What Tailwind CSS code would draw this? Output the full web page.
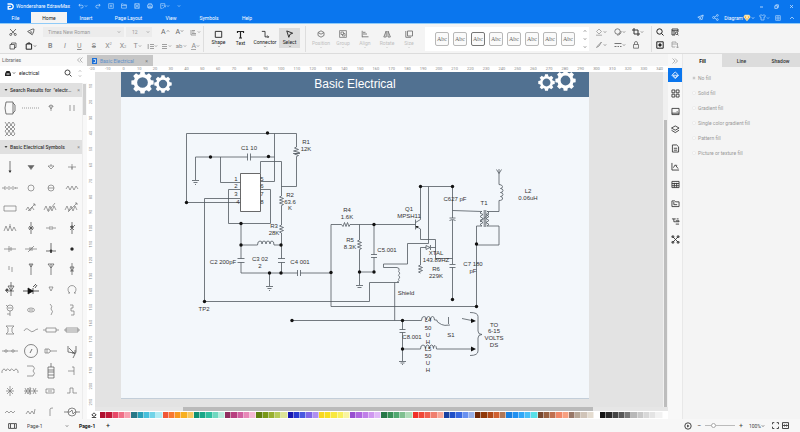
<!DOCTYPE html>
<html lang="en">
<head>
<meta charset="utf-8">
<title>Wondershare EdrawMax</title>
<script src="https://cdn.jsdelivr.net/npm/@tailwindcss/browser@4"></script>
</head>
<body class="h-screen flex flex-col overflow-hidden bg-[#f4f4f4] text-[#333] font-['Roboto','Noto_Sans',sans-serif] text-[5px] leading-[6px]">

<svg class="hidden">
  <symbol id="caret" viewBox="0 0 4 4"><path d="M.8 1.3 2 2.6 3.2 1.3" fill="none" stroke="currentColor" stroke-width=".6"/></symbol>
  <symbol id="gear" viewBox="-12 -12 24 24">
    <g fill="#fff"><circle r="7.4" fill="none" stroke="#fff" stroke-width="3.6"/>
    <path id="tooth" d="M-2.7-8 -2.1-11.6H2.1L2.7-8ZM-2.7 8 -2.1 11.6H2.1L2.7 8Z"/>
    <use href="#tooth" transform="rotate(45)"/><use href="#tooth" transform="rotate(90)"/><use href="#tooth" transform="rotate(135)"/></g>
  </symbol>
</svg>

<header class="bg-[#0a76ee] text-white shrink-0 border-b border-[#8fcbf8]">
  <div class="h-[12px] flex items-center pl-[7px] pr-[6px]">
    <svg class="w-[7px] h-[7px] mr-[2px]" viewBox="0 0 7 7" fill="none" stroke="#fff" stroke-width="1.3"><path d="M.5 1h3.2a2.4 2.4 0 0 1 0 5H1.2V3.4h2.6"/></svg>
    <span class="w-[62px] whitespace-nowrap">Wondershare EdrawMax</span>
    <div class="flex items-center gap-[7px] text-[#c4e0fc]">
      <button aria-label="Undo" class="flex items-center"><svg class="w-[6px] h-[6px]" viewBox="0 0 7 7" fill="none" stroke="currentColor" stroke-width=".8"><path d="M2.5 1 1 2.6l1.5 1.5M1 2.6h3.4a1.5 1.5 0 0 1 0 3.2H3"/></svg><svg class="w-[4px] h-[4px]"><use href="#caret"/></svg></button>
      <button aria-label="Redo"><svg class="w-[6px] h-[6px]" viewBox="0 0 7 7" fill="none" stroke="currentColor" stroke-width=".8"><path d="M4.5 1 6 2.6 4.5 4.1M6 2.6H2.6a1.5 1.5 0 0 0 0 3.2H4"/></svg></button>
      <button aria-label="New"><svg class="w-[6px] h-[6px]" viewBox="0 0 7 7" fill="none" stroke="currentColor" stroke-width=".7"><path d="M.8.8h5.4v5.4H.8ZM3.5 2v3M2 3.5h3"/></svg></button>
      <button aria-label="Open"><svg class="w-[6px] h-[6px]" viewBox="0 0 7 7" fill="none" stroke="currentColor" stroke-width=".7"><path d="M.6 6V1h2l.7 1h3v4ZM.6 3h5.7"/></svg></button>
      <button aria-label="Save"><svg class="w-[6px] h-[6px]" viewBox="0 0 7 7" fill="none" stroke="currentColor" stroke-width=".7"><path d="M.8.8h5.4v5.4H.8ZM2 .8v2h3v-2M2 6.2v-2h3v2"/></svg></button>
      <button aria-label="Print"><svg class="w-[6px] h-[6px]" viewBox="0 0 7 7" fill="none" stroke="currentColor" stroke-width=".7"><path d="M1.8 2.2V.8h3.4v1.4M.6 2.2h5.8v3H.6ZM1.8 4v2.2h3.4V4Z"/></svg></button>
      <button aria-label="Export" class="flex items-center"><svg class="w-[6px] h-[6px]" viewBox="0 0 7 7" fill="none" stroke="currentColor" stroke-width=".7"><path d="M3 6.2H.8V.8h4.8V3M2 3h2M3.5 6 6.3 3.3M4.6 3.3h1.7V5"/></svg><svg class="w-[4px] h-[4px]"><use href="#caret"/></svg></button>
      <button aria-label="More"><svg class="w-[4px] h-[4px]"><use href="#caret"/></svg></button>
    </div>
    <div class="ml-auto flex items-center gap-[10px] text-[#d5e9fd]">
      <button aria-label="Minimize"><svg class="w-[5px] h-[5px]" viewBox="0 0 5 5" stroke="currentColor" stroke-width=".8"><path d="M1 3h3"/></svg></button>
      <button aria-label="Restore"><svg class="w-[5px] h-[5px]" viewBox="0 0 5 5" fill="none" stroke="currentColor" stroke-width=".7"><path d="M.8 1.8h2.6v2.6H.8ZM1.8 1.8V.8h2.6v2.6h-1"/></svg></button>
      <button aria-label="Close"><svg class="w-[5px] h-[5px]" viewBox="0 0 5 5" stroke="currentColor" stroke-width=".7"><path d="m1 1 3 3M4 1 1 4"/></svg></button>
    </div>
  </div>
  <div class="flex h-[11px] items-stretch">
    <nav class="flex [&>a]:flex [&>a]:items-center [&>a]:justify-center">
      <a href="#" class="w-[31px]">File</a>
      <a href="#" class="w-[36px] bg-[#f4f4f4] text-[#222]">Home</a>
      <a href="#" class="w-[38px]">Insert</a>
      <a href="#" class="w-[47px]">Page Layout</a>
      <a href="#" class="w-[38px]">View</a>
      <a href="#" class="w-[38px]">Symbols</a>
      <a href="#" class="w-[38px]">Help</a>
    </nav>
    <div class="ml-auto flex items-center gap-[8px] pr-[5px] text-[#b5d8fb]">
      <button aria-label="Send"><svg class="w-[7px] h-[7px]" viewBox="0 0 7 7" fill="none" stroke="currentColor" stroke-width=".8"><path d="M.8 3.2 6.2 1 5 5.8 3 4.2ZM6.2 1 3 4.2v2"/></svg></button>
      <button aria-label="Share"><svg class="w-[7px] h-[7px]" viewBox="0 0 7 7" fill="none" stroke="currentColor" stroke-width=".8"><circle cx="1.6" cy="3.5" r="1"/><circle cx="5.4" cy="1.4" r=".9"/><circle cx="5.4" cy="5.6" r=".9"/><path d="m2.5 3 2-1.2M2.5 4l2 1.2"/></svg></button>
      <button class="flex items-center text-white -ml-[3px]">Diagram<svg class="w-[8px] h-[8px]" viewBox="0 0 8 8"><path d="M1.800.8h4.400L7.600 3 4 7.300.400 3Z" fill="#fbe3a8"/><path d="M1.600 2.400h4.800L4 6.600Z" fill="#e9a92e"/><path d="M3 2.400h2L4 6Z" fill="#fff"/></svg><svg class="w-[4px] h-[4px]"><use href="#caret"/></svg></button>
      <button aria-label="Theme" class="flex items-center -ml-[4px]"><svg class="w-[7px] h-[7px]" viewBox="0 0 7 7" fill="none" stroke="currentColor" stroke-width=".7"><path d="M.6 1.6 2 .8q1.5 1.2 3 0l1.4.8-.6 1.6-.8-.3V6H2V2.9l-.8.3Z"/></svg><svg class="w-[4px] h-[4px]"><use href="#caret"/></svg></button>
      <button aria-label="Apps" class="-ml-[3px]"><svg class="w-[6px] h-[6px]" viewBox="0 0 7 7" fill="none" stroke="currentColor" stroke-width=".8"><path d="M.8.8h5.4v5.4H.8ZM3.5.8v5.4M.8 3.5h5.4"/></svg></button>
      <button aria-label="Collapse ribbon"><svg class="w-[6px] h-[6px]" viewBox="0 0 6 6" fill="none" stroke="currentColor" stroke-width=".8"><path d="M1 4 3 2l2 2"/></svg></button>
    </div>
  </div>
</header>

<section aria-label="Ribbon" class="h-[30px] shrink-0 flex items-center border-b border-[#dcdcdc] text-[#8a8a8a]">
  <div class="w-[40px] grid grid-cols-2 gap-y-[6px] pl-[4px] justify-items-center text-[#4a4a4a]">
    <button aria-label="Cut"><svg class="w-[8px] h-[8px]" viewBox="0 0 8 8" fill="none" stroke="currentColor" stroke-width=".8"><path d="m1 1 4.8 5M7 1 2.2 6"/><circle cx="1.7" cy="6.500" r="1"/><circle cx="6.300" cy="6.500" r="1"/></svg></button>
    <button aria-label="Format painter"><svg class="w-[8px] h-[8px]" viewBox="0 0 8 8" fill="none" stroke="currentColor" stroke-width=".8"><path d="m.6 3.5 4.5-2.300L7 1l-.4 3-1.4 2.800ZM2.500 4.500l2-1M3.600 5.300l1.600-.8"/></svg></button>
    <button aria-label="Copy"><svg class="w-[8px] h-[8px]" viewBox="0 0 8 8" fill="none" stroke="currentColor" stroke-width=".8"><path d="M1 2.500h4.500V7H1ZM2.500 2.500V1H7v4.500H5.500"/></svg></button>
    <button aria-label="Paste" class="flex items-center"><svg class="w-[8px] h-[8px]" viewBox="0 0 8 8" fill="none" stroke="#222" stroke-width="1"><path d="M1.200 2h5.400v5.200H1.200ZM2.800 2V1h2.200v1"/></svg><svg class="w-[4px] h-[4px]"><use href="#caret"/></svg></button>
  </div>
  <div class="w-[163px] flex flex-col gap-[5px] pl-[3px]">
    <div class="flex items-center h-[10px]">
      <label class="relative flex w-[81px] h-[10px] bg-[#ececec] items-center"><select aria-label="Font" class="appearance-none w-full px-[5px] text-[5px] leading-[6px] text-[#999]"><option>Times New Roman</option></select><svg class="absolute right-[3px] w-[4px] h-[4px]"><use href="#caret"/></svg></label>
      <label class="relative flex w-[26px] h-[10px] ml-[2px] bg-[#ececec] items-center"><select aria-label="Font size" class="appearance-none w-full px-[6px] text-[5px] leading-[6px] text-[#999]"><option>12</option></select><svg class="absolute right-[2px] w-[4px] h-[4px]"><use href="#caret"/></svg></label>
      <button aria-label="Increase font size" class="ml-[9px] text-[7px] text-[#666] flex items-center">A<svg class="w-[4px] h-[4px] mb-[3px] rotate-180"><use href="#caret"/></svg></button>
      <button aria-label="Decrease font size" class="ml-[6px] text-[7px] text-[#666] flex items-center">A<svg class="w-[4px] h-[4px] mb-[3px]"><use href="#caret"/></svg></button>
      <button aria-label="Align text" class="ml-[6px] flex items-center"><svg class="w-[7px] h-[7px]" viewBox="0 0 7 7" stroke="currentColor" stroke-width=".8"><path d="M1 1v5M2 1.500h3M2 3h2.500M2 4.500h4M1 6h5"/></svg><svg class="w-[4px] h-[4px]"><use href="#caret"/></svg></button>
    </div>
    <div class="grid grid-cols-11 h-[8px] text-[7px] leading-[8px] [&>button]:flex [&>button]:items-center [&>button]:justify-center">
      <button class="font-bold">B</button><button class="italic">I</button><button class="underline">U</button><button class="line-through">S</button>
      <button>X<sup class="text-[4px]">2</sup></button><button>X<sub class="text-[4px]">2</sub></button>
      <button>T<svg class="w-[4px] h-[4px]"><use href="#caret"/></svg></button>
      <button aria-label="Line spacing"><svg class="w-[7px] h-[7px]" viewBox="0 0 7 7" stroke="currentColor" stroke-width=".8"><path d="M1.200 1v5M3 1.500h4M3 3.500h4M3 5.500h4"/></svg><svg class="w-[4px] h-[4px]"><use href="#caret"/></svg></button>
      <button aria-label="Bullets"><svg class="w-[7px] h-[7px]" viewBox="0 0 7 7" stroke="currentColor" stroke-width=".8"><path d="M1 1.500h5M1 3.500h5M1 5.500h5"/></svg><svg class="w-[4px] h-[4px]"><use href="#caret"/></svg></button>
      <button class="text-[6px]">ab<svg class="w-[4px] h-[4px]"><use href="#caret"/></svg></button>
      <button><span class="border-b border-[#aaa] leading-[6px]">A</span><svg class="w-[4px] h-[4px]"><use href="#caret"/></svg></button>
    </div>
  </div>
  <div class="h-[26px] border-l border-[#dedede] flex items-start pt-[2px] w-[102px] pl-[3px] text-[#222] [&>button]:flex [&>button]:flex-col [&>button]:items-center [&>button]:h-[20px] [&>button]:pt-[2px] [&_.ic]:w-[9px] [&_.ic]:h-[9px] [&_.ic]:mb-[1px] [&_.ca]:w-[4px] [&_.ca]:h-[3px]">
    <button class="w-[23px]"><svg class="ic" viewBox="0 0 9 9" fill="none" stroke="currentColor"><path d="M1 1.500h7v6.500H1Z"/></svg>Shape<svg class="ca"><use href="#caret"/></svg></button>
    <button class="w-[21px]"><svg class="ic" viewBox="0 0 9 9" fill="none" stroke="currentColor" stroke-width="1.2"><path d="M1.500 3V1.500h6V3M4.500 1.500V8M3 8h3"/></svg>Text</button>
    <button class="w-[28px]"><svg class="ic" viewBox="0 0 9 9" fill="none" stroke="currentColor" stroke-width=".9"><path d="M.5 1.500H4v6h3.500M6.500 6l1.500 1.500L6.500 9"/></svg>Connector<svg class="ca"><use href="#caret"/></svg></button>
    <button class="w-[21px] bg-[#dcdcdc]"><svg class="ic" viewBox="0 0 9 9" fill="none" stroke="currentColor" stroke-width="1"><path d="m1.500 1 6.500 2.500-3 1.200L3.800 8Z"/></svg>Select<svg class="ca"><use href="#caret"/></svg></button>
  </div>
  <div class="h-[26px] border-l border-[#dedede] flex items-start pt-[2px] w-[120px] pl-[4px] text-[#c0c0c0] [&>button]:w-[22px] [&>button]:flex [&>button]:flex-col [&>button]:items-center [&>button]:pt-[2px] [&_.ic]:w-[8px] [&_.ic]:h-[8px] [&_.ic]:mb-[2px] [&_.ic]:text-[#777] [&_.ca]:w-[4px] [&_.ca]:h-[3px]">
    <button><svg class="ic" viewBox="0 0 8 8" fill="none" stroke="currentColor" stroke-width=".9"><path d="M4 .8 7 2.500 4 4.200 1 2.500ZM1 5.500 4 7.200 7 5.500M1 2.500v3M7 2.500v3"/></svg>Position<svg class="ca"><use href="#caret"/></svg></button>
    <button><svg class="ic" viewBox="0 0 8 8" fill="none" stroke="currentColor" stroke-width=".8"><path d="M.6.6h6.800v6.800H.6ZM2 2h2.500v2.500H2ZM4.500 3.500H6V6H3.500V4.500"/></svg>Group<svg class="ca"><use href="#caret"/></svg></button>
    <button><svg class="ic" viewBox="0 0 8 8" fill="none" stroke="currentColor" stroke-width=".9"><path d="M1.200.8v6.400M2 2.300h2.500M2 4h4M1 6.800h6.500"/></svg>Align<svg class="ca"><use href="#caret"/></svg></button>
    <button><svg class="ic" viewBox="0 0 8 8" fill="none" stroke="currentColor" stroke-width=".9"><path d="M3.200 1v6H.8ZM5 1v6h2.400Z"/></svg>Rotate<svg class="ca"><use href="#caret"/></svg></button>
    <button><svg class="ic" viewBox="0 0 8 8" fill="none" stroke="currentColor" stroke-width=".9"><path d="M2.500 1h5v5h-5ZM.8 1v6.300H6"/></svg>Size<svg class="ca"><use href="#caret"/></svg></button>
  </div>
  <div id="styles" class="h-[24px] bg-white flex items-center w-[164px] pl-[10px] gap-[4px]"></div>
  <div class="grid grid-cols-3 w-[62px] gap-y-[5px] pl-[6px] items-center text-[#666] [&>button]:flex [&>button]:items-center [&_.ic]:w-[8px] [&_.ic]:h-[8px] [&_.ca]:w-[4px] [&_.ca]:h-[4px]">
    <button aria-label="Fill"><svg class="ic" viewBox="0 0 8 8" fill="none" stroke="#999" stroke-width=".8"><path d="m4 1 2.500 2.500L4 6 1.500 3.500ZM1 7.200h6"/></svg><svg class="ca"><use href="#caret"/></svg></button>
    <button aria-label="Shadow"><svg class="ic" viewBox="0 0 8 8" fill="none" stroke="currentColor" stroke-width=".8"><circle cx="3.500" cy="3.500" r="2.700"/><path d="M7 3a3.500 3.500 0 0 1-4 4"/></svg><svg class="ca"><use href="#caret"/></svg></button>
    <button aria-label="Crop"><svg class="ic" viewBox="0 0 8 8" fill="none" stroke="#333" stroke-width="1"><path d="M2 0v6h6M0 2h6v6"/></svg><svg class="ca"><use href="#caret"/></svg></button>
    <button aria-label="Line colour"><svg class="ic" viewBox="0 0 8 8" fill="none" stroke="#999" stroke-width="1"><path d="M1.500 6.500 3 4.500 6.500 1 4 5Z"/></svg><svg class="ca"><use href="#caret"/></svg></button>
    <button aria-label="Line style"><svg class="ic" viewBox="0 0 8 8" fill="none" stroke="currentColor" stroke-width=".9"><path d="M.5 2.500h7M.5 5.500h2M3.500 5.500h1.500M6 5.500h1.500"/></svg><svg class="ca"><use href="#caret"/></svg></button>
    <button aria-label="Lock"><svg class="ic" viewBox="0 0 8 8" fill="none" stroke="currentColor" stroke-width=".8"><path d="M1.500 3.500h5v3.700h-5ZM2.500 3.500V2a1.500 1.500 0 0 1 3 0v1.500"/></svg></button>
  </div>
  <div class="h-[26px] border-l border-[#dedede] grid grid-cols-2 content-center w-[34px] gap-y-[5px] pl-[4px] text-[#222] [&_svg]:w-[8px] [&_svg]:h-[8px]">
    <button aria-label="Find"><svg viewBox="0 0 8 8" fill="none" stroke="currentColor" stroke-width="1"><circle cx="3.500" cy="3.500" r="2.700"/><path d="m5.500 5.500 2 2"/></svg></button>
    <button aria-label="Find in page"><svg viewBox="0 0 8 8" fill="none" stroke="currentColor" stroke-width=".8"><path d="M4 7H1V1h6v3M1 2.700h6M3 2.700V7"/><circle cx="5.500" cy="5.300" r="1.200"/><path d="m6.300 6.200 1.200 1.200"/></svg></button>
    <button aria-label="Focus"><svg viewBox="0 0 8 8" fill="none" stroke="currentColor" stroke-width="1"><path d="M.8.8h6.400v6.400H.8Z"/><circle cx="4" cy="4" r="1.200" fill="currentColor"/></svg></button>
    <button aria-label="Replace shape"><svg viewBox="0 0 8 8" fill="none" stroke="#999" stroke-width=".8"><path d="M4 6H1V1h4v3M6.500 2v5M5 5.500 6.500 7 8 5.500M1 3h3"/></svg></button>
  </div>
</section>

<main class="flex-1 min-h-0 flex">
  <aside class="w-[87px] shrink-0 flex flex-col bg-[#f8f8f8]">
    <div class="flex justify-between items-center h-[12px] pl-[2px] pr-[4px] text-[#666]">Libraries
      <button aria-label="Collapse libraries"><svg class="w-[6px] h-[6px]" viewBox="0 0 6 6" fill="none" stroke="#888" stroke-width=".6"><path d="M3 .5.500 3 3 5.500M5.500.5 3 3l2.500 2.500"/></svg></button></div>
    <div class="flex items-center h-[17px] pb-[3px] bg-white pl-[4px]">
      <button aria-label="Library list" class="flex items-center"><svg class="w-[8px] h-[7px]" viewBox="0 0 8 7"><path d="M1 3.500 2.500 1h3L7 3.500V6H1Z" fill="#222"/><path d="M2.500 4h3" stroke="#fff"/></svg><svg class="w-[4px] h-[4px]"><use href="#caret"/></svg></button>
      <input aria-label="Search libraries" value="electrical" class="w-[45px] ml-[3px] bg-transparent text-[5px] leading-[6px] h-[8px] text-[#222] outline-none">
      <button aria-label="Search"><svg class="w-[8px] h-[8px]" viewBox="0 0 8 8" fill="none" stroke="#333" stroke-width=".9"><circle cx="3.500" cy="3.500" r="2.500"/><path d="m5.500 5.500 2 2"/></svg></button>
      <span class="ml-auto mr-[5px] flex flex-col gap-[1px] text-[#999]"><svg class="w-[4px] h-[4px] rotate-180"><use href="#caret"/></svg><svg class="w-[4px] h-[4px]"><use href="#caret"/></svg></span>
    </div>
    <div class="flex flex-1 min-h-0">
      <div class="flex-1 min-w-0 flex flex-col">
        <h2 class="h-[14px] shrink-0 bg-[#e0e0e0] flex items-center pl-[4px] pr-[2px] gap-[2px] whitespace-nowrap font-medium"><svg class="w-[4px] h-[4px]"><path d="M.5 1h3L2 3Z" fill="#444"/></svg>Search Results for&nbsp; "electr... <span class="ml-auto font-normal text-[#888]">×</span></h2>
        <div id="found" class="h-[43px] shrink-0 grid grid-cols-4 auto-rows-fr py-[1px]"></div>
        <h2 class="h-[14px] shrink-0 bg-[#e0e0e0] flex items-center pl-[4px] pr-[2px] gap-[2px] whitespace-nowrap font-medium"><svg class="w-[4px] h-[4px]"><path d="M.5 1h3L2 3Z" fill="#444"/></svg>Basic Electrical Symbols <span class="ml-auto font-normal text-[#888]">×</span></h2>
        <div class="flex-1 min-h-0 overflow-hidden"><div id="symbols" class="h-full grid grid-cols-4 auto-rows-fr mt-[3px]"></div></div>
      </div>
      <div class="w-[5px] border-l border-[#ececec]"><div class="w-[3px] mt-[1px] h-[31px] bg-[#d0d0d0]"></div></div>
    </div>
  </aside>

  <section class="flex-1 min-w-0 flex flex-col">
    <div class="h-[12px] shrink-0 flex bg-[#f4f4f4] pt-[1px]">
      <div class="w-[66px] bg-[#c6c6c6] flex items-center px-[5px] gap-[3px] text-[#5b8fca]"><svg class="w-[5px] h-[6px]" viewBox="0 0 5 6"><path d="M0 0h5v6H0Z" fill="#1b6fd6"/><path d="M1.500 1.500h2v3h-2" stroke="#fff" stroke-width=".7" fill="none"/></svg>Basic Electrical<button aria-label="Close tab" class="ml-auto text-[#777]">×</button></div>
    </div>
    <div id="hruler" class="h-[6px] shrink-0 bg-white flex justify-between items-center pl-[5px] pr-[8px] text-[4px] leading-[4px] text-[#888]"></div>
    <div class="flex-1 min-h-0 flex">
      <div id="vruler" class="w-[8px] bg-white flex flex-col justify-between pt-[14px] pb-[9px] text-[4px] leading-[4px] text-[#888]"></div>
      <div class="flex-1 min-w-0 flex flex-col">
        <div class="flex-1 min-h-0 flex">
          <div class="flex-1 min-w-0 overflow-hidden bg-[#e3e3e3] pl-[26px]">
            <article class="w-[468px] bg-[#f3f7fb] border-b border-[#c3ced9]">
              <div class="h-[25px] bg-[#517191] flex items-center justify-between pl-[10px] pr-[13px] text-white text-[12px] leading-[14px] font-['Liberation_Sans',Arial,sans-serif]">
                <div class="flex items-center h-[25px] overflow-hidden"><svg class="w-[23px] h-[23px] mb-[5px]"><use href="#gear"/></svg><svg class="w-[18px] h-[18px] mb-[1px]"><use href="#gear"/></svg></div>
                <h1 class="pb-[2px]">Basic Electrical</h1>
                <div class="flex items-center h-[25px] overflow-hidden"><svg class="w-[17px] h-[17px] mb-[4px]"><use href="#gear"/></svg><svg class="w-[21px] h-[21px] mb-[8px]"><use href="#gear"/></svg></div>
              </div>
              <svg class="block w-[468px] h-[301px] font-['Liberation_Sans',Arial,sans-serif]" viewBox="121 97 468 301" role="img" aria-label="Circuit diagram">
                <g fill="none" stroke="#505860" stroke-width=".8">
                  <!-- timer section -->
                  <path d="M240.500 202.500H186.500V133.500H296.500V147l-2 1 4 1.500-5 1.500 6 1.500-5 1.500 4 1.500-2 1V186.500H281.500"/>
                  <path d="M293 153.500h7M274.500 133.500V181.500H260.500M195.500 157H247.500M250.500 157H274.500M247.500 153.500v7M250.500 153.500v7"/>
                  <path d="M195.500 157V180M192 180.500h7M193.500 182.500h4M195 184.500h1M220.500 157V182.500H240.500"/>
                  <path d="M260.500 173V161.500H281.500V196l-2 1 4 1.500-4 1.500 4 1.500-4 1.500 4 1.500-2 1V225l-2 1 4 1.500-4 1.500 4 1.500-4 1.500 2 1V258.500M278 258.500h7M278 262.500h7M281.500 262.500V273"/>
                  <path d="M240.500 189.500H228.500V223.500H270.500V189.500H260.500M240.500 198.500H204.500V301.500H369.500V282.500H399"/>
                  <path d="M241 223.500V258.500M237.500 258.500h7M237.500 262.500h7M241 262.500V273H297.500M300.500 273H331M297.500 270v6M300.500 270v6"/>
                  <path d="M241 245H257.500q0-4 2.500-4t2 3q0-3 2-3t2 3q0-3 2-3t2 3q0-3 2-3t2 4H281M269.500 273V286M266 286.500h7M267.500 288.500h4M269 290.500h1"/>
                  <!-- oscillator section -->
                  <path d="M415.500 224.500H350l-1 2-1.500-4-1.500 4-1.500-4-1.500 4-1.500-2H331V306.500H476.500V226H482"/>
                  <path d="M359.500 224.500V240l-2 1 4 1.500-4 1.500 4 1.500-4 1.500 4 1.500-2 1V285M356 285.500h7M357.500 287.500h4M374 224.500V254.500M371 254.500h6M371 257.500h6M374 257.500V272H359.500"/>
                  <path d="M415.500 219.500v10M415.500 222.500l5-3V186.500H452.500V218M415.500 226l5 3V239.500H435.500V258.500H452.500M428.500 186.500V243.500H407.500V264H383.500V267.500H397"/>
                  <path d="M397 267.500q3 .500 2 3-1 1 0 1.500 1.500 1 0 2.500-1 .8 0 1.500 1.500 1 0 2.500-1 .8 0 2-.5 1.500-2 1.500M394.700 282.500V320.500"/>
                  <path d="M435.500 247.500H431M426 247.500H420.500V265l-2 1 4 1.500-4 1.500 4 1.500-4 1.500 2 1M426 245.500v4l4-2ZM430.500 245v5"/>
                  <path d="M449.500 218h6M449.500 220.500q3-2 6 0M452.500 220V264M449.500 264.500h6M449.500 267.500h6M452.500 267.500V299.500"/>
                  <path d="M452.500 210.500 482 211.500M482 211l-2 2 3 1.500-3 2 3 2-3 2 3 2-3 2 2 1.500M487 211l2 2-3 1.500 3 2-3 2 3 2-3 2 3 2-2 1.500M484.200 210v17M485.800 210v17M480 222l9-8"/>
                  <path d="M487 211.500H499V200.500q4 0 3.500-2.500-.5-1.500-2-1.500 2.500-.3 2.500-2t-2.500-2q2.500-.2 2.500-2t-2.500-2q2.200-.2 2-2-.5-2-3.500-2V169M496.500 169.500l2.500 4 2.500-4M487 226H499V245H476.500"/>
                  <!-- supply section -->
                  <path d="M292 320.500H421.500q0-4 2.500-4t2.500 3.500q0-3.500 2-3.500t2 3.500q0-3.500 2-3.500t2 3.500q3-1 3 2l4 2.500q2.500 1.500 8.500.500M448.500 317v7M462 318.500l12 2.500"/>
                  <path d="M402.500 320.500V329.500M399.500 329.500h6M399.500 332.500h6M402.500 332.500V361M399 361.500h7M400.500 363h4M402 364.500h1M402.500 349H420.500q0-4 2.500-4t2.500 3.500q0-3.500 2-3.500t2 3.500q0-3.500 2-3.500t2 3.500q0-3.500 1.500-3t1.500 3.500H474"/>
                  <path d="M470 312.500q8 0 8 4V331q0 3.500 4 3.500-4 0-4 3.500V351q0 4.500-8 4.500"/>
                </g>
                <path d="M240.500 173.500h20v38h-20Z" fill="#fff" stroke="#444" stroke-width=".8"/>
                <g id="dots" fill="#111"><path d="m476 321-5-2.500v4.500ZM476 349l-5-2.500v5ZM415.800 226l3 .300-2 2.300Z"/></g>
                <g id="labels" fill="#333" class="text-[6px]" text-anchor="middle"></g>
              </svg>
            </article>
          </div>
          <div class="w-[5px] bg-[#f0f0f0] pt-[48px] pl-[1px] flex"><div class="w-[3px] bg-[#bdbdbd]"></div></div>
        </div>
        <div class="h-[4px] shrink-0 bg-[#e6e6e6] pl-[88px] pr-[75px]"><div class="h-[4px] bg-[#bababa]"></div></div>
      </div>
    </div>
    <div class="h-[8px] shrink-0 flex items-center bg-white pl-[4px] pr-[6px]"><svg class="w-[6px] h-[6px] mr-[3px] shrink-0" viewBox="0 0 6 6" fill="none" stroke="#333" stroke-width=".9"><path d="M3 .8 5.200 3 3 4.500.800 3ZM.8 5.500h4.400"/></svg><div id="palette" class="flex-1 flex h-[6px]"></div></div>
  </section>

  <nav aria-label="Panels" class="w-[14px] shrink-0 bg-[#f8f8f8] flex flex-col items-center">
    <button aria-label="Collapse panel" class="h-[14px]"><svg class="w-[6px] h-[6px]" viewBox="0 0 6 6" fill="none" stroke="#888" stroke-width=".6"><path d="m.5.500 2.500 2.500L.5 5.500M3 .5 5.500 3 3 5.500"/></svg></button>
    <div id="panels" class="w-[14px] h-[179px] flex flex-col justify-between"></div>
  </nav>

  <aside class="w-[118px] shrink-0 flex flex-col border-l border-[#e8e8e8] text-[#999]">
    <div class="flex h-[13px] text-[#333] font-medium">
      <button class="flex-1 font-bold text-[#111]">Fill</button><button class="flex-1 bg-[#dcdcdc]">Line</button><button class="flex-1 bg-[#dcdcdc]">Shadow</button>
    </div>
    <form class="pt-[3px] pl-[9px] [&>label]:flex [&>label]:items-center [&>label]:h-[15px] [&>label]:gap-[2px] [&_input]:appearance-none [&_input]:w-[4px] [&_input]:h-[4px] [&_input]:rounded-full [&_input]:bg-white [&_input]:border [&_input]:border-[#ececec] [&_input:checked]:bg-[#bbb]">
      <label><input type="radio" name="fill" checked>No fill</label>
      <label><input type="radio" name="fill">Solid fill</label>
      <label><input type="radio" name="fill">Gradient fill</label>
      <label><input type="radio" name="fill">Single color gradient fill</label>
      <label><input type="radio" name="fill">Pattern fill</label>
      <label><input type="radio" name="fill">Picture or texture fill</label>
    </form>
  </aside>
</main>

<footer class="h-[13px] shrink-0 flex items-center bg-[#f7f7f7] pl-[8px] pr-[11px] text-[#444]">
  <button aria-label="Page view"><svg class="w-[9px] h-[6px]" viewBox="0 0 9 6" fill="none" stroke="#444" stroke-width=".9"><path d="M2.500.600h4v4.800h-4ZM2.500.600H.600v4.800h1.900M6.500.600h1.900v4.800H6.500"/></svg></button>
  <label class="relative flex items-center ml-[10px] w-[52px]"><select aria-label="Page" class="appearance-none w-[45px] text-[5px] leading-[6px]"><option>Page-1</option></select><svg class="absolute right-[10px] w-[4px] h-[4px]"><use href="#caret"/></svg></label>
  <button class="font-bold text-[#111] w-[27px] text-left">Page-1</button>
  <button aria-label="Add page" class="text-[7px] text-[#111]">+</button>
  <div class="ml-auto flex items-center">
    <button aria-label="Play"><svg class="w-[8px] h-[8px]" viewBox="0 0 8 8" fill="none" stroke="#333" stroke-width=".9"><circle cx="4" cy="4" r="3.200"/><path d="m3.200 2.500 2.200 1.500-2.200 1.500Z" fill="#333" stroke="none"/></svg></button>
    <button aria-label="Zoom out" class="ml-[5px] text-[7px]">−</button>
    <input type="range" aria-label="Zoom" value="25" class="appearance-none w-[30px] mx-[4px] h-[1px] bg-[#bbb] [&::-webkit-slider-thumb]:appearance-none [&::-webkit-slider-thumb]:w-[5px] [&::-webkit-slider-thumb]:h-[5px] [&::-webkit-slider-thumb]:rounded-full [&::-webkit-slider-thumb]:bg-white [&::-webkit-slider-thumb]:border [&::-webkit-slider-thumb]:border-[#aaa]">
    <button aria-label="Zoom in" class="text-[7px] mr-[6px]">+</button>
    <button class="flex items-center mr-[7px]">100%<svg class="w-[4px] h-[4px]"><use href="#caret"/></svg></button>
    <button aria-label="Fit page" class="mr-[3px]"><svg class="w-[7px] h-[7px]" viewBox="0 0 7 7" fill="none" stroke="#333" stroke-width=".9"><path d="M.5 2.300V.600H2.300M4.700.600h1.800v1.700M6.500 4.700v1.800H4.700M2.300 6.500H.500V4.700"/></svg></button>
    <button aria-label="Fit width"><svg class="w-[7px] h-[7px]" viewBox="0 0 7 7" fill="none" stroke="#333" stroke-width=".9"><path d="M.5.600h6v5.900h-6ZM1.500 3.500h4M2.500 2.500l-1 1 1 1M4.500 2.500l1 1-1 1"/></svg></button>
  </div>
</footer>

<script>
const $ = id => document.getElementById(id);

$('styles').innerHTML = Array.from({length: 8}, (_, i) =>
  `<button class="w-[14px] h-[14px] rounded-[2px] border ${i == 2 ? 'border-[#777]' : 'border-[#b8b8b8]'} bg-[#fafafa] text-[#666] text-[6px] leading-[12px] font-['Liberation_Serif',serif]">Abc</button>`).join('') +
  '<span class="ml-[4px] flex flex-col gap-[4px] text-[#555]"><svg class="w-[4px] h-[4px] rotate-180"><use href="#caret"/></svg><svg class="w-[4px] h-[4px]"><use href="#caret"/></svg><svg class="w-[4px] h-[4px]"><use href="#caret"/></svg></span>';

for (let n = -20; n <= 340; n += 10) $('hruler').innerHTML += `<span class="w-0 flex justify-center">${n}</span>`;
for (let n = 10; n <= 210; n += 10) $('vruler').innerHTML += `<span class="h-0 flex items-center justify-center"><span class="-rotate-90">${n}</span></span>`;

const cell = d => `<button class="flex items-center justify-center"><svg class="w-[18px] h-[18px]" viewBox="-9 -9 18 18" fill="none" stroke="#777" stroke-width=".7">${d}</svg></button>`;
const p = d => `<path d="${d}"/>`;
$('found').innerHTML = [
  '<path d="M-4-6H3V6H-4Q-6 0-4-6ZM3-5 5-3V3L3 5" stroke="#444"/>',
  '<path d="M-9 0H9" stroke-dasharray="1 1"/>', p('M-2-2 0 1 2-2M0-3V3M-2-1A2 2 0 0 1 2-1'), p('M-2-3V3M2-3V3'),
  '<path d="M-5-7-3-4-5-2-3 0-5 2-3 5-5 7M-1-7-3-4-1-2-3 0-1 2-3 5-1 7M-1-7 1-4-1-2 1 0-1 2 1 5-1 7M3-7 1-4 3-2 1 0 3 2 1 5 3 7M3-7 5-4 3-2 5 0 3 2 5 5 3 7" stroke="#555" stroke-width=".6"/>'
].map(cell).join('');

$('symbols').innerHTML = [
  '<path d="M0-6V5" stroke="#444"/><path d="M-1.500 3.500H1.500L0 6Z" fill="#333" stroke="none"/>', '<path d="M-3-1.500H3L0 2.500Z" fill="#666"/>', p('M-3-1H3L0 2ZM0-3V-1'), p('M-4 0H4M0-3V3M-1 1H1'),
  p('M-8 0H-5M-5-2V2M-3-1V1M-1-2V2M1-1V1M3-2V2M5-1V1M5 0H8'), '<circle r="3"/>', '<circle r="3"/><path d="M-3 0H3"/>', p('M-6 1-4-2-2 2 0-2 2 2 4-2 6 1'),
  p('M-6-2H6V3H-6Z'), p('M-5 2-3-1-1 3 1-1 3 2M-3 3 4-4M2-4H4V-2'), p('M-7 2-5-2-3 3-1-2 1 3 3-2 5 2M-3 4 4-5'), p('M-7 2-5-2-3 3-1-2 1 3 3-2 5 2M-4 4 5-5M3-5H5V-3'),
  p('M-6 3-4-2-2 3 0-2 2 3 4-1 6 3M0-4V-1'), '<path d="M0-6V6M-3 0H3M-2-2 2 2M-2 2 2-2" stroke="#444"/>', p('M-5 0H-1M-1-2V2M1-2V2M1 0H5'), '<path d="M0-6V6M-2-2 2 2M-2 2 3-3" stroke="#444"/><circle cy="-1" r="1.300" fill="#444"/>',
  p('M-6 0H6M-1-3V3M1-2V2'), p('M-6 0H6M-3 3 3-3M-1-2V2M1-2V2'), '<path d="M0-6V4M-5 2H5M-1 1 0 4 1 1Z" fill="#333" stroke="#333"/>', '<circle r="1.500" fill="#111"/>',
  p('M-1-3V1M2-2V3'), '<path d="M0-5V6M-2-5 0-2 2-5Z" stroke="#555"/>', '<path d="M0-5V6M-3-5H3L0-1Z" stroke="#555"/>', '<path d="M0-6V6M-2-2H2L0 2ZM-2 2H2" stroke="#555"/>',
  '<path d="M1-7V7M-2-3H4L1 2ZM-2 2H4M-5 1-2 4" stroke="#444"/><circle cx="-3" cy="1" r="1.200" fill="#222"/>', '<path d="M-8 2H8M-3-1 2 2-3 5ZM2-1V5M2-2 5-5M4-1 6-4" fill="#111" stroke="#111"/>', p('M-2-2H2L0 2Z'), '<path d="M-2 4A4 4 0 1 1 2 4M-4 4H-2M2 4H4"/>',
  '<circle cy="-2" r="3"/><path d="M-2-2H2M0 1V6M-4-5-2-3M-3 4H0"/>', '<ellipse rx="3.500" ry="2"/><path d="M-2 0H2"/>', p('M-1-6Q2-4 0-1 3 1 0 5'), p('M-2-5H1V-2H-1V1H2V5H-1'),
  p('M-4-4H4L2-2V2L4 4H-4L-2 2V-2Z'), p('M-7 1Q-5-3-2 0T3 1 7-1'), p('M-8 0H-5M5 0H8M-5-2H5V2H-5Z'), p('M-8 0H-6M6 0H8M-6-2H6V2H-6ZM-6 0H6'),
  p('M-8 0H-5M-5-1H-3V1H-5ZM-3 0H2M2-1H4V1H2ZM4 0H8'), '<circle r="6.500" stroke="#555"/><path d="M1-2-1 2" stroke="#333"/>', p('M-6-2H-2Q1 0-2 2H-6ZM-1 0H6M-4-2V2'), '<path d="M-4-5V1L2 2M4-5V1L1 7M-3-3 3 3M0 2H3V-1" stroke="#444"/>',
  p('M-8 2V0Q-6-4-4 0-3-4 0 0 1-4 4 0 6-4 8 0V2'), p('M-4-5H2Q5-3 2 0 5 2 2 5H-4'), '<path d="M-3-4H3V7H-3ZM-3-1H3M-3 1H3M-3 4H3M0-8V-4" stroke="#555"/>', p('M-4 0H2M2-4V4M2-4H0'),
  p('M-4 0H4M-3-3 0 0-3 3M3-3 0 0 3 3M0-5V5'), p('M-7 0H7M-6-3-3 3M-3-3-6 3M-1-4V4M2-3 5 3M5-3 2 3M-3-3 0 3M0-3-3 3'), p('M-5-2H3V2H-5ZM-3 0H1'), p('M-5 2H-2V-3H1V2H5'),
  p('M-5 1-3-1-1 1 1-1 3 1 5-1'), p('M-5 2-3-1-1 2 1-1 3 2 4-3'), p('M-1 4V-3Q-1-4 2-4'), '<circle r="4" stroke="#555"/><path d="M-8 0H-2L0-2 1 2 3 0H8" stroke="#555"/>'
].map(cell).join('');

const panel = [
  'M4.500 1 8 4.500 4.500 8 1 4.500ZM2 4.500H7L4.500 7Z', 'M1 1H4V4H1ZM5.500 1H8.500V4H5.500ZM1 5.500H4V8.500H1ZM5.500 5.500H8.500V8.500H5.500Z', 'M1 1.500H8.500V8H1ZM1 6.500H8.500M6 5H7',
  'M4.500 1 8.500 3.200 4.500 5.500.5 3.200ZM.5 5.500 4.500 8 8.500 5.500', 'M1.500 1H6L8 3V8.500H1.500ZM3 4.500H6.500M3 6.500H6.500', 'M1 1V8.500H8.500M2.500 6 4.500 3 7.500 7M6 4V3',
  'M1 1.500H8.500V8H1ZM1 3.700H8.500M1 6H8.500M3.500 3V8M6 3V8', 'M1 2H4L5 3H8.500V8H1ZM3 3V6H6.500', 'M1 2H5M6 2H8M3 2V5H5M5 4H8.500V5H5M5 7.500H8.500', 'M1.500 1.500 8 8M8 1.500 1.500 8M1 1H3V2.500H1ZM6.500 1H8.500V2.500H6.500ZM1 7H3V8.500H1ZM6.500 7H8.500V8.500H6.500Z'];
const names = ['Fill', 'Shapes', 'Image', 'Layers', 'Notes', 'Chart', 'Table', 'Attachments', 'Structure', 'Arrange'];
$('panels').innerHTML = panel.map((d, i) =>
  `<button aria-label="${names[i]}" class="h-[14px] flex items-center justify-center ${i ? 'text-[#333]' : 'bg-[#0a76ee] text-white'}"><svg class="w-[9px] h-[9px]" viewBox="0 0 9.500 9.500" fill="none" stroke="currentColor" stroke-width=".9"><path d="${d}"/></svg></button>`).join('');

const colors = ('#b01030 #c01838 #e84868 #f07088 #f8a0b0 #287888 #2aa0b8 #48c0dc #70d4e8 #b0ecf4 #f05838 #f87830 #f89820 #f8b020 #f8c860 #109070 #18a888 #30c0a0 #70d8c0 #b8ecdc ' +
  '#903060 #b84080 #d060a0 #e888b8 #f4b8d4 #608010 #789818 #98b030 #b8cc58 #dce498 #1818b0 #2838d0 #4858e0 #8068e8 #b090f0 #f8d820 #f8e020 #f8e840 #f8f060 #f8f4a0 ' +
  '#9850d0 #b068e0 #c080e8 #d098f0 #e0b8f8 #287848 #389058 #50a870 #80c090 #b0dcb8 #f03028 #f04838 #f06050 #f08070 #f8a898 #1840a0 #2050c8 #3868e0 #6890f0 #98b0e8 ' +
  '#702808 #903808 #b04818 #d06030 #b07858 #1880e0 #2090f0 #30a8f8 #48c0f8 #58e0e8 #784830 #986040 #c07050 #f08868 #f8a080 #987868 #b8a898 #d0c4b8 #e4dcd0 #fff ' +
  '#151515 #2c2c2c #444 #585858 #787878 #b8b8b8 #c8c8c8 #d8d8d8 #e4e4e4 #f2f2f2').split(' ');
$('palette').innerHTML = colors.map(c => `<i class="flex-1 border-r border-white/50" style="background:${c}"></i>`).join('');

[[267.5,133],[210.5,157],[268.5,156.5],[186.5,202.5],[241,223.5],[241,245],[281,245],[269.5,273],[281,273],[204.5,301.5],[331,272.5],[374,224.5],[359.5,272],[374,272],
 [420.5,186.5],[452.5,186.5],[476.5,244],[476.5,306.5],[452.5,299.5],[292,320.5],[402.5,320.5],[402.5,349]]
  .forEach(([x, y]) => $('dots').innerHTML += `<circle cx="${x}" cy="${y}" r="1.7"/>`);

[['C1 10',249,150],['R1',306,144],['12K',306,151],['1',236,181],['2',236,188],['3',236,196],['4',238,204],['5',262,181],['6',262,188],['7',262,196],['8',262,204],
 ['R2',290,197],['63.6',290,204],['K',290,210],['R3',274,228],['28K',274,235],['C2 200pF',223,264],['C3 02',260,261],['2',260,268],['C4 001',300,264],['TP2',204,311],
 ['R4',347,212],['1.6K',347,219],['R5',350,242],['8.3K',350,249],['C5.001',387,252],['Q1',409,211],['MPSH11',409,218],['C627 pF',455,201],['T1',484,205],['L2',528,193],['0.06uH',528,200],
 ['XTAL',436,255],['143.89HZ',436,262],['R6',436,271],['229K',436,278],['C7 180',473,266],['pF',473,273],['Shield',406,295],['C8.001',412,339],
 ['L4',428,322],['50',428,330],['U',428,337],['H',428,344],['L5',428,351],['50',428,358],['U',428,365],['H',428,372],['S1',451,337],['TO',494,327],['6-15',494,333],['VOLTS',494,340],['DS',494,347]]
  .forEach(([t, x, y]) => $('labels').innerHTML += `<text x="${x}" y="${y}">${t}</text>`);
</script>
</body>
</html>
